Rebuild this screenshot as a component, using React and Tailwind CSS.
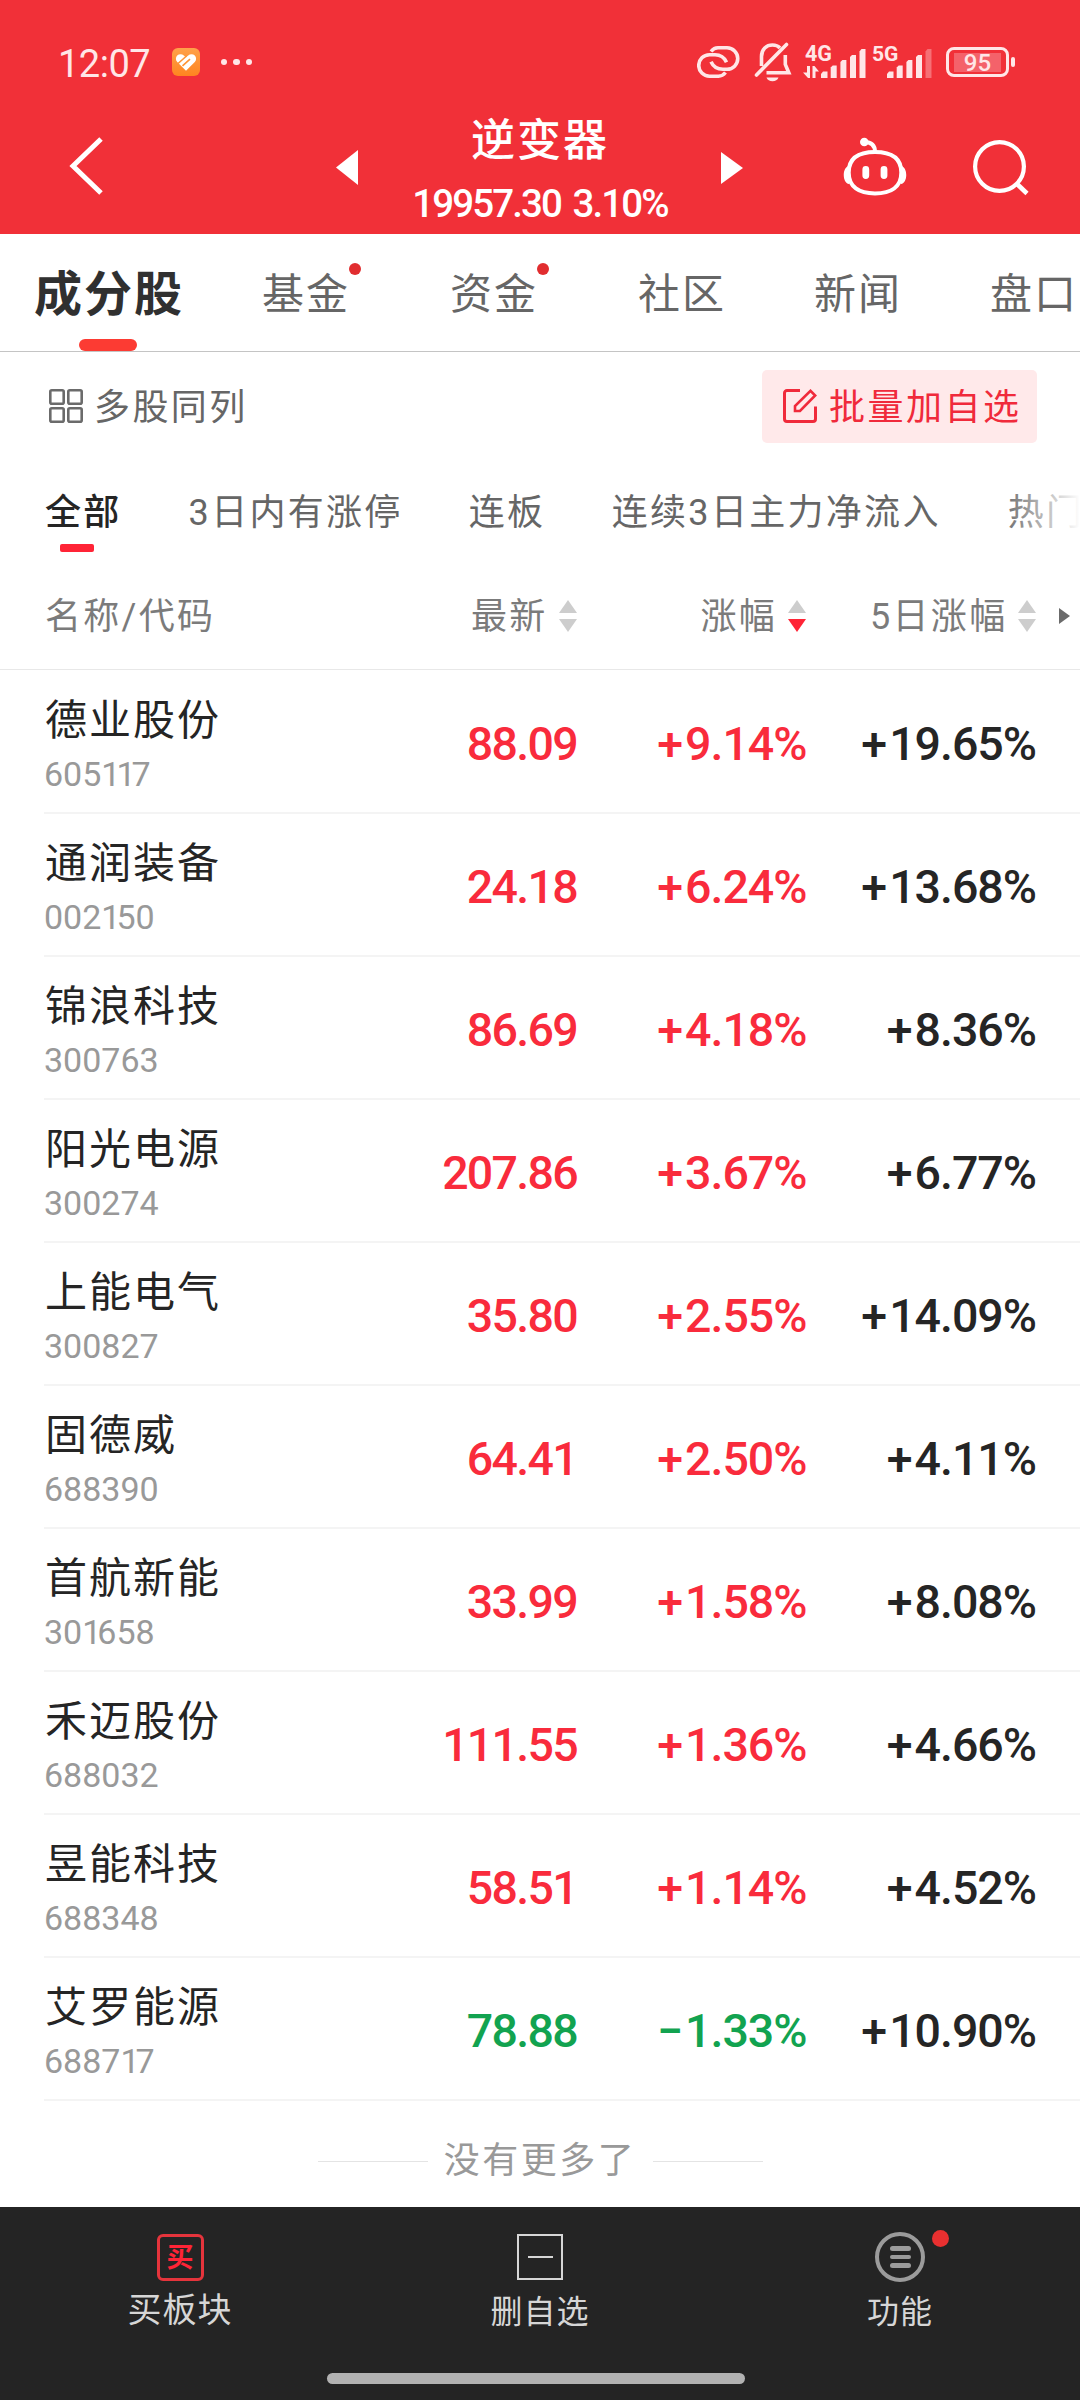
import React from "react";

const stocks = [
  ["德业股份", "605117", "88.09", "+9.14%", "+19.65%"],
  ["通润装备", "002150", "24.18", "+6.24%", "+13.68%"],
  ["锦浪科技", "300763", "86.69", "+4.18%", "+8.36%"],
  ["阳光电源", "300274", "207.86", "+3.67%", "+6.77%"],
  ["上能电气", "300827", "35.80", "+2.55%", "+14.09%"],
  ["固德威", "688390", "64.41", "+2.50%", "+4.11%"],
  ["首航新能", "301658", "33.99", "+1.58%", "+8.08%"],
  ["禾迈股份", "688032", "111.55", "+1.36%", "+4.66%"],
  ["昱能科技", "688348", "58.51", "+1.14%", "+4.52%"],
  ["艾罗能源", "688717", "78.88", "−1.33%", "+10.90%"],
];

function Signal({ weak }) {
  return (
    <svg width="45" height="30" viewBox="0 0 45 30" fill="#ffe6e7">
      <path d="M0 30v-4l2-2.500h4.500V30z" />
      <path d="M9.700 30V19.500l2-2h4V30z" />
      <path d="M19.400 30V14l2-2h4v18z" />
      <path d="M29 30V9l2-2h4v23z" />
      <path d="M38.500 30V3.500l2-2.500h4v29z" opacity={weak ? 0.35 : 1} />
    </svg>
  );
}

function StatusBar() {
  return (
    <div className="flex h-[124px] items-center pl-[58px]">
      <span className="w-[114px] pt-[3px] text-[38px] leading-[40px] tracking-[-0.500px] text-[#ffe6e7] [font-weight:450]">12:07</span>
      <svg width="28" height="28" viewBox="0 0 28 28">
        <defs>
          <linearGradient id="badge" x1="0" y1="0" x2="0" y2="1">
            <stop offset="0" stopColor="#ffa14a" />
            <stop offset="1" stopColor="#ff8420" />
          </linearGradient>
        </defs>
        <rect width="28" height="28" rx="6" fill="url(#badge)" />
        <path d="M14 22.800L5.200 14a4.700 4.700 0 0 1 0-6.500 4.700 4.700 0 0 1 6.600 0L14 9.300l2.200-1.800a4.700 4.700 0 0 1 6.600 0 4.700 4.700 0 0 1 0 6.500z" fill="#fff" />
        <path d="M5.500 16L14.500 8M10.500 17.800l7.500-6.700" stroke="#ff9436" strokeWidth="1.600" fill="none" />
      </svg>
      <div className="ml-[20.500px] flex gap-[6px]">
        <i className="size-[6.500px] rounded-full bg-[#ffe6e7]" />
        <i className="size-[6.500px] rounded-full bg-[#ffe6e7]" />
        <i className="size-[6.500px] rounded-full bg-[#ffe6e7]" />
      </div>
      <svg className="ml-[445px]" width="44" height="34" viewBox="0 0 44 34" fill="none" stroke="#ffe6e7" strokeWidth="3.600">
        <path d="M14 6.500C16 4 18 2.800 21 2.800h9a10.500 10.500 0 0 1 0 21.500H26c-5.500 0-9.500-2-12-7.500" />
        <path d="M28.500 27.500c-2 2.500-4 3.700-7 3.700h-9a10.500 10.500 0 0 1 0-21.500H18c5 0 9 2 11.500 7.500" />
      </svg>
      <svg className="ml-[13px]" width="38" height="40" viewBox="0 0 38 40" fill="none" stroke="#ffe6e7" strokeWidth="3.600">
        <path d="M7.500 24V14.500C7.500 7 12.500 3 18.500 3c3 0 5.700 1 7.500 3" />
        <path d="M31.300 13v9.500l3.500 8.200H12.500" />
        <path d="M32.500 2.500L2.500 33" strokeLinecap="round" />
        <path d="M12.500 35.500h12c-1 2.500-3 3.800-6 3.800s-5-1.300-6-3.800z" fill="#ffe6e7" stroke="none" />
      </svg>
      <div className="relative ml-[11px] h-[34px] w-[63px]">
        <span className="absolute top-[-1px] left-[2px] text-[21.500px] leading-[20px] font-bold text-[#ffe6e7]">4G</span>
        <svg className="absolute bottom-[1px] left-0" width="16" height="12" viewBox="0 0 16 12" fill="#ffe6e7">
          <path d="M4 0h3v12H5L0 6.500h4z" />
          <path d="M9.500 12V0h2L16 5.500h-3.500V12z" />
        </svg>
        <div className="absolute right-0 bottom-[1px]"><Signal /></div>
      </div>
      <div className="relative ml-[5px] h-[34px] w-[61px]">
        <span className="absolute top-[-1px] left-[1px] text-[21px] leading-[20px] font-bold text-[#ffe6e7]">5G</span>
        <div className="absolute right-0 bottom-[1px]"><Signal weak /></div>
      </div>
      <div className="ml-[14px] flex h-[30px] w-[63px] items-center justify-center rounded-[8px] border-3 border-[#ffe6e7]">
        <span className="h-[19px] w-[47px] bg-[#f4626a] text-center text-[24px] leading-[21px] font-medium text-[#ffe6e7]">95</span>
      </div>
      <i className="ml-[2px] h-[10px] w-[4px] rounded-[2px] bg-[#ffe6e7]" />
    </div>
  );
}

function TitleBar() {
  return (
    <div className="flex h-[110px] items-start pl-[68px] text-white">
      <svg className="mt-[12px]" width="38" height="60" viewBox="0 0 38 60" fill="none" stroke="#fff" strokeWidth="5">
        <path d="M33 3L5 30l28 27" />
      </svg>
      <svg className="mt-[26px] ml-[230px]" width="22" height="35" viewBox="0 0 22 35" fill="#fff">
        <path d="M22 0v35L0 17.500z" />
      </svg>
      <div className="ml-[37px] flex w-[290px] flex-col items-center">
        <h1 className="mt-[-10px] text-[44px] leading-[54px] font-medium tracking-[2px]">逆变器</h1>
        <p className="mt-[14px] text-[38.500px] leading-[44px] font-medium tracking-[-1.900px] [word-spacing:4px] whitespace-pre">19957.30 3.10%</p>
      </div>
      <svg className="mt-[28px] ml-[36px]" width="22" height="32" viewBox="0 0 22 32" fill="#fff">
        <path d="M0 0v32l22-16z" />
      </svg>
      <svg className="mt-[12px] ml-[100px]" width="64" height="60" viewBox="0 0 64 60" fill="none" stroke="#fff" strokeWidth="4">
        <path d="M32 16C48 16 58.300 22 58.300 36.500S48 57.500 32 57.500 5.700 51 5.700 36.500 16 16 32 16z" />
        <path d="M21.300 6c7 0 10.700 3 10.700 10" />
        <circle cx="21.300" cy="6" r="4.300" fill="#fff" stroke="none" />
        <path d="M6 30c-7 1-7 17 0 18zM58 30c7 1 7 17 0 18z" fill="#fff" stroke="none" />
        <path d="M22.800 33.500v6M41 33.500v6" strokeWidth="6.800" strokeLinecap="round" />
      </svg>
      <svg className="mt-[16px] ml-[66px]" width="56" height="56" viewBox="0 0 56 56" fill="none" stroke="#fff" strokeWidth="4.200">
        <circle cx="26.500" cy="26.500" r="24.400" />
        <path d="M43.500 43.500l10.500 10" strokeWidth="4.600" />
      </svg>
    </div>
  );
}

function Sort({ down }) {
  return (
    <svg width="18" height="32" viewBox="0 0 18 32">
      <path d="M9 0l9 13H0z" fill="#cdcdcd" />
      <path d="M9 32l9-13H0z" fill={down ? "#ff2436" : "#cdcdcd"} />
    </svg>
  );
}

function Tab({ children, dot, className }) {
  return (
    <span className={"relative shrink-0 text-[42px] leading-[60px] tracking-[2px] text-[#666] " + className}>
      {children}
      {dot && <i className="absolute top-[-2px] right-[-11px] size-[12px] rounded-full bg-[#e12d2f]" />}
    </span>
  );
}

/* Stock code with the narrow figure one set tighter than the other figures. */
function Code({ value }) {
  return value.split(/(1+)/).map((part, i) =>
    part.startsWith("1") ? <span key={i} className="tracking-[-4px]">{part}</span> : part
  );
}

function Percent({ value }) {
  return (
    <>
      <span className="tracking-[2px]">{value[0]}</span>
      {value.slice(1)}
    </>
  );
}

function Row({ item }) {
  const [name, code, price, change, five] = item;
  const tone = change.startsWith("+") ? "text-[#f92b3c]" : "text-[#12a350]";
  return (
    <div className="ml-[44px] grid h-[143px] grid-cols-[306px_227px_229.500px_229.500px] items-start border-b-2 border-[#f4f4f4]">
      <div className="pt-[22px] pl-[1px]">
        <div className="text-[42px] leading-[56px] tracking-[2px] whitespace-nowrap text-[#252525]">{name}</div>
        <div className="mt-[5px] ml-[-1px] text-[34px] leading-[40px] text-[#999]"><Code value={code} /></div>
      </div>
      <div className={"pt-[45px] text-right text-[46.500px] leading-[56px] font-medium tracking-[-1.700px] " + tone}>{price}</div>
      <div className={"pt-[45px] text-right text-[46.500px] leading-[56px] font-medium tracking-[-1px] " + tone}><Percent value={change} /></div>
      <div className="pt-[45px] text-right text-[46.500px] leading-[56px] font-medium tracking-[-1px] text-[#252525]"><Percent value={five} /></div>
    </div>
  );
}

export default function App() {
  return (
    <div className="flex h-[2400px] w-[1080px] flex-col overflow-hidden bg-white font-['Roboto','Noto_Sans_CJK_SC',sans-serif]">
      <header className="h-[234px] shrink-0 bg-[#f13038]">
        <StatusBar />
        <TitleBar />
      </header>

      <nav className="flex h-[118px] shrink-0 items-start overflow-hidden border-b border-[#c4c4c4] pt-[31px] pl-[34px]">
        <div className="flex shrink-0 flex-col items-center">
          <span className="text-[48px] leading-[60px] font-bold tracking-[2px] text-[#303030]">成分股</span>
          <i className="mt-[14px] mr-[2px] h-[12px] w-[58px] rounded-full bg-[#fc3b33]" />
        </div>
        <Tab className="ml-[78px]" dot>基金</Tab>
        <Tab className="ml-[100px]" dot>资金</Tab>
        <Tab className="ml-[100px]">社区</Tab>
        <Tab className="ml-[88px]">新闻</Tab>
        <Tab className="ml-[88px]">盘口</Tab>
      </nav>

      <div className="flex h-[108px] shrink-0 items-center pr-[43px] pl-[49px]">
        <svg width="34" height="34" viewBox="0 0 34 34" fill="none" stroke="#6b6b6b" strokeWidth="2.600">
          <rect x="1.300" y="1.300" width="13.400" height="13.400" rx="1.500" />
          <rect x="19.300" y="1.300" width="13.400" height="13.400" rx="1.500" />
          <rect x="1.300" y="19.300" width="13.400" height="13.400" rx="1.500" />
          <rect x="19.300" y="19.300" width="13.400" height="13.400" rx="1.500" />
        </svg>
        <span className="ml-[11px] pt-[3px] text-[36px] leading-[48px] tracking-[2.400px] text-[#666]">多股同列</span>
        <div className="ml-auto flex h-[73px] w-[275px] items-center rounded-[5px] bg-[#ffe9ea] pl-[21px] text-[#f02a3b]">
          <svg width="34" height="34" viewBox="0 0 34 34" fill="none" stroke="currentColor" strokeWidth="3">
            <path d="M17 1.500H4A2.500 2.500 0 0 0 1.500 4v26A2.500 2.500 0 0 0 4 32.500h26a2.500 2.500 0 0 0 2.500-2.500V17.500" />
            <path d="M12 22v-5L27.500 1.800l4.700 4.700L17 22z" strokeWidth="2.600" />
          </svg>
          <span className="ml-[12px] pt-[3px] text-[36px] leading-[48px] tracking-[2.500px] whitespace-nowrap">批量加自选</span>
        </div>
      </div>

      <div className="relative flex h-[102px] shrink-0 items-start overflow-hidden pt-[29px] pl-[45px] text-[36px] leading-[48px] tracking-[2.300px] whitespace-nowrap text-[#666]">
        <div className="flex shrink-0 flex-col items-center">
          <span className="font-medium text-[#252525]">全部</span>
          <i className="mt-[7px] mr-[12px] h-[8px] w-[34px] rounded-[2px] bg-[#ff2436]" />
        </div>
        <span className="ml-[67px]">3日内有涨停</span>
        <span className="ml-[66px]">连板</span>
        <span className="ml-[66.500px]">连续3日主力净流入</span>
        <span className="ml-[67px]">热门</span>
        <div className="absolute top-0 right-0 h-full w-[80px] bg-linear-to-r from-white/0 to-white" />
      </div>

      <div className="flex h-[108px] shrink-0 items-center border-b border-[#e8e8e8] pl-[45px] text-[36px] leading-[48px] tracking-[2.300px] whitespace-nowrap text-[#7b7b7b]">
        <span className="w-[426px] pt-[2px]">名称/代码</span>
        <span className="w-[88px] pt-[2px]">最新</span>
        <Sort />
        <span className="ml-[123.500px] w-[87.500px] pt-[2px]">涨幅</span>
        <Sort down />
        <span className="ml-[64px] w-[148px] pt-[2px]">5日涨幅</span>
        <Sort />
        <svg className="ml-[23px]" width="11" height="16" viewBox="0 0 11 16" fill="#6b6b6b">
          <path d="M0 0v16l11-8z" />
        </svg>
      </div>

      <main className="shrink-0 pt-[1px]">
        {stocks.map((s) => (
          <Row key={s[1]} item={s} />
        ))}
      </main>

      <div className="flex h-[106px] shrink-0 items-center justify-center pt-[11px] text-[36px] leading-[48px] tracking-[2.500px] text-[#999]">
        <i className="mt-[3px] h-px w-[110px] bg-[#e4e4e4]" />
        <span className="mx-[16px] w-[193px] pt-[2px] text-center whitespace-nowrap">没有更多了</span>
        <i className="mt-[3px] h-px w-[110px] bg-[#e4e4e4]" />
      </div>

      <footer className="h-[193px] shrink-0 bg-[#242424] text-[#d6d6d6]">
        <div className="grid h-[166px] grid-cols-3">
          <div className="flex flex-col items-center pt-[27px]">
            <div className="flex h-[47px] w-[47px] items-center justify-center rounded-[6px] border-3 border-[#e5343c] pt-[1px] text-[27px] leading-[40px] font-bold text-[#ff2436]">买</div>
            <span className="mt-[6px] text-[34px] leading-[46px] tracking-[1px]">买板块</span>
          </div>
          <div className="flex flex-col items-center pt-[27px]">
            <div className="flex h-[46px] w-[46px] items-center justify-center border-2 border-[#d6d6d6]">
              <i className="h-[2px] w-[25px] bg-[#d6d6d6]" />
            </div>
            <span className="mt-[10px] text-[32px] leading-[44px] tracking-[1px]">删自选</span>
          </div>
          <div className="flex flex-col items-center pt-[25px]">
            <div className="relative flex size-[50px] flex-col items-center justify-center gap-[4px] rounded-full border-4 border-[#9b9b9b]">
              <i className="h-[4.500px] w-[21px] rounded-full bg-[#9b9b9b]" />
              <i className="h-[4.500px] w-[21px] rounded-full bg-[#9b9b9b]" />
              <i className="h-[4.500px] w-[21px] rounded-full bg-[#9b9b9b]" />
              <i className="absolute top-[-6px] left-[53px] size-[17px] rounded-full bg-[#e93030]" />
            </div>
            <span className="mt-[8px] text-[32px] leading-[44px] tracking-[1px]">功能</span>
          </div>
        </div>
        <div className="ml-[327px] h-[11px] w-[418px] rounded-full bg-[#b2b2b2]" />
      </footer>
    </div>
  );
}
